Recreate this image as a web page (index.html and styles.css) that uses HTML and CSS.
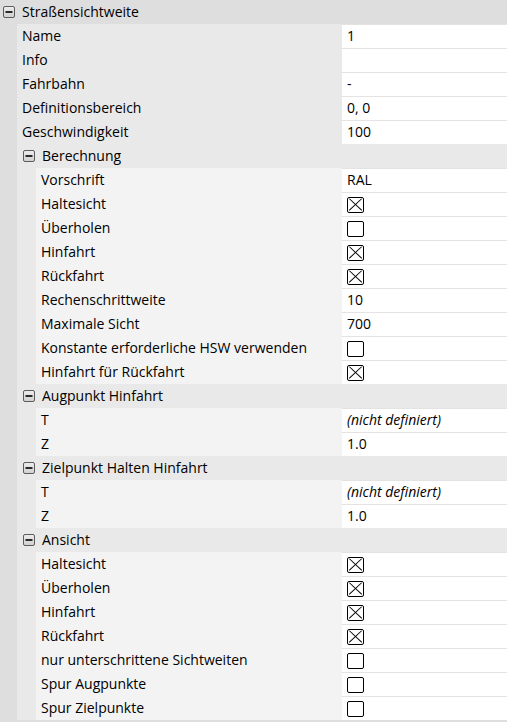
FILE: index.html
```html
<!DOCTYPE html>
<html>
<head>
<meta charset="utf-8">
<link rel="stylesheet" href="styles.css">
</head>
<body>
<div class="grid">
  <div class="ghead top">
    <span class="exp"><svg width="12" height="12" viewBox="0 0 12 12"><defs><linearGradient id="g" x1="0" y1="0" x2="0" y2="1"><stop offset="0" stop-color="#eeeeee"/><stop offset="1" stop-color="#cfcfcf"/></linearGradient></defs><rect x="0.5" y="0.5" width="11" height="11" rx="1.5" fill="url(#g)" stroke="#5c5c5c"/><rect x="2.5" y="5" width="7" height="2" fill="#2a2a2a"/></svg></span>
    <span class="glabel">Straßensichtweite</span>
  </div>
  <div class="gbody l1">
    <div class="row"><div class="lab">Name</div><div class="val"><span class="txt">1</span></div></div>
    <div class="row"><div class="lab">Info</div><div class="val"></div></div>
    <div class="row"><div class="lab">Fahrbahn</div><div class="val"><span class="txt">-</span></div></div>
    <div class="row"><div class="lab">Definitionsbereich</div><div class="val"><span class="txt">0, 0</span></div></div>
    <div class="row"><div class="lab">Geschwindigkeit</div><div class="val"><span class="txt">100</span></div></div>

    <div class="ghead sub">
      <span class="exp"><svg width="12" height="12" viewBox="0 0 12 12"><rect x="0.5" y="0.5" width="11" height="11" rx="1.5" fill="url(#g)" stroke="#5c5c5c"/><rect x="2.5" y="5" width="7" height="2" fill="#2a2a2a"/></svg></span>
      <span class="glabel">Berechnung</span>
    </div>
    <div class="gbody l2">
      <div class="row"><div class="lab">Vorschrift</div><div class="val"><span class="txt">RAL</span></div></div>
      <div class="row"><div class="lab">Haltesicht</div><div class="val"><span class="cb x"></span></div></div>
      <div class="row"><div class="lab">Überholen</div><div class="val"><span class="cb"></span></div></div>
      <div class="row"><div class="lab">Hinfahrt</div><div class="val"><span class="cb x"></span></div></div>
      <div class="row"><div class="lab">Rückfahrt</div><div class="val"><span class="cb x"></span></div></div>
      <div class="row"><div class="lab">Rechenschrittweite</div><div class="val"><span class="txt">10</span></div></div>
      <div class="row"><div class="lab">Maximale Sicht</div><div class="val"><span class="txt">700</span></div></div>
      <div class="row"><div class="lab">Konstante erforderliche HSW verwenden</div><div class="val"><span class="cb"></span></div></div>
      <div class="row"><div class="lab">Hinfahrt für Rückfahrt</div><div class="val"><span class="cb x"></span></div></div>
    </div>

    <div class="ghead sub">
      <span class="exp"><svg width="12" height="12" viewBox="0 0 12 12"><rect x="0.5" y="0.5" width="11" height="11" rx="1.5" fill="url(#g)" stroke="#5c5c5c"/><rect x="2.5" y="5" width="7" height="2" fill="#2a2a2a"/></svg></span>
      <span class="glabel">Augpunkt Hinfahrt</span>
    </div>
    <div class="gbody l2">
      <div class="row"><div class="lab">T</div><div class="val it"><span class="txt">(nicht definiert)</span></div></div>
      <div class="row"><div class="lab">Z</div><div class="val"><span class="txt">1.0</span></div></div>
    </div>

    <div class="ghead sub">
      <span class="exp"><svg width="12" height="12" viewBox="0 0 12 12"><rect x="0.5" y="0.5" width="11" height="11" rx="1.5" fill="url(#g)" stroke="#5c5c5c"/><rect x="2.5" y="5" width="7" height="2" fill="#2a2a2a"/></svg></span>
      <span class="glabel">Zielpunkt Halten Hinfahrt</span>
    </div>
    <div class="gbody l2">
      <div class="row"><div class="lab">T</div><div class="val it"><span class="txt">(nicht definiert)</span></div></div>
      <div class="row"><div class="lab">Z</div><div class="val"><span class="txt">1.0</span></div></div>
    </div>

    <div class="ghead sub">
      <span class="exp"><svg width="12" height="12" viewBox="0 0 12 12"><rect x="0.5" y="0.5" width="11" height="11" rx="1.5" fill="url(#g)" stroke="#5c5c5c"/><rect x="2.5" y="5" width="7" height="2" fill="#2a2a2a"/></svg></span>
      <span class="glabel">Ansicht</span>
    </div>
    <div class="gbody l2">
      <div class="row"><div class="lab">Haltesicht</div><div class="val"><span class="cb x"></span></div></div>
      <div class="row"><div class="lab">Überholen</div><div class="val"><span class="cb x"></span></div></div>
      <div class="row"><div class="lab">Hinfahrt</div><div class="val"><span class="cb x"></span></div></div>
      <div class="row"><div class="lab">Rückfahrt</div><div class="val"><span class="cb x"></span></div></div>
      <div class="row"><div class="lab">nur unterschrittene Sichtweiten</div><div class="val"><span class="cb"></span></div></div>
      <div class="row"><div class="lab">Spur Augpunkte</div><div class="val"><span class="cb"></span></div></div>
      <div class="row"><div class="lab">Spur Zielpunkte</div><div class="val"><span class="cb"></span></div></div>
    </div>
  </div>
</div>
</body>
</html>
```
FILE: styles.css
```css
html, body {
  margin: 0;
  padding: 0;
  background: #dedede;
}
.grid {
  width: 507px;
  font-family: "Open Sans", "Noto Sans", sans-serif;
  font-size: 14px;
  color: #000;
  display: flex;
  flex-direction: column;
}
.ghead {
  height: 24px;
  display: flex;
  align-items: center;
  box-sizing: border-box;
}
.ghead.top {
  background: #dedede;
  padding-left: 3px;
}
.ghead.sub {
  background: #e9e9e9;
  padding-left: 6px;
}
.glabel {
  padding-bottom: 2px;
}
.exp {
  display: flex;
  width: 12px;
  height: 12px;
  margin-right: 7px;
}
.gbody {
  display: flex;
  flex-direction: column;
}
.gbody.l1 {
  margin-left: 17px;
}
.gbody.l2 {
  padding-left: 19px;
  background: #e9e9e9;
}
.row {
  display: flex;
  height: 24px;
}
.lab {
  flex: 1;
  display: flex;
  align-items: center;
  padding-left: 5px;
  padding-bottom: 2px;
  white-space: nowrap;
}
.l1 > .row > .lab { background: #e9e9e9; }
.l2 > .row > .lab { background: #f3f3f3; }
.val {
  width: 165px;
  flex: none;
  box-sizing: border-box;
  background: #fff;
  border-top: 1px solid #e3e3e3;
  display: flex;
  align-items: center;
  padding-left: 5px;
}
.txt {
  padding-bottom: 2px;
}
.val.it { font-style: italic; }
.cb {
  width: 17px;
  height: 16px;
  box-sizing: border-box;
  border: 1px solid #000;
  border-radius: 2px;
  background: #fff;
  position: relative;
}
.cb.x::before, .cb.x::after {
  content: "";
  position: absolute;
  left: -1px;
  top: 6.3px;
  width: 17px;
  height: 1.3px;
  background: #000;
  transform: rotate(43deg);
}
.cb.x::after { transform: rotate(-43deg); }
```
